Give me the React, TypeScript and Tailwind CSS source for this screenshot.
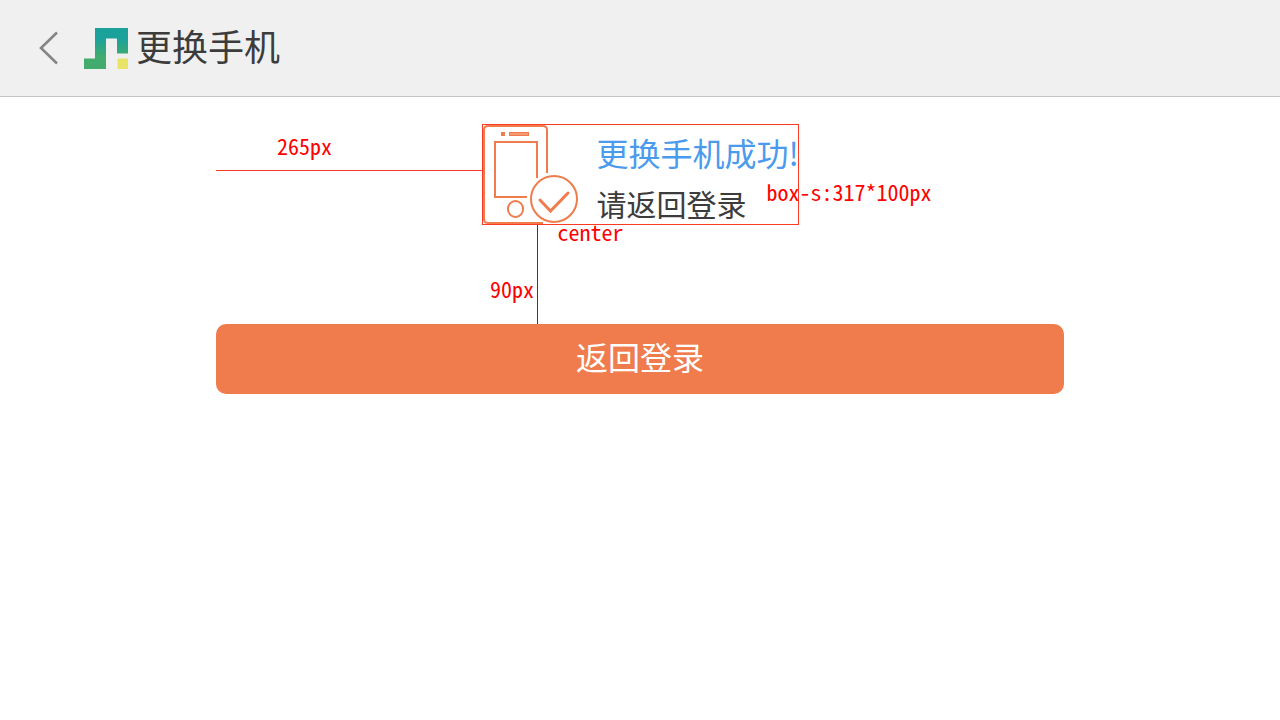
const noteFont =
  "font-['Noto_Sans_Mono_CJK_SC','Liberation_Mono','Noto_Sans_CJK_SC',monospace] text-[22px] leading-5 text-[#ff0000] whitespace-nowrap";

function BackIcon() {
  return (
    <svg width="20" height="34" viewBox="0 0 20 34" fill="none" aria-hidden="true">
      <path d="M18 1.500 L2 17 L18 32.500" stroke="#858585" strokeWidth="2.600" />
    </svg>
  );
}

function Logo() {
  return (
    <svg width="44" height="41" viewBox="0 0 44 41" aria-hidden="true">
      <defs>
        <linearGradient id="logo" x1="0" y1="0" x2="0" y2="41" gradientUnits="userSpaceOnUse">
          <stop offset="0.250" stopColor="#1aa19c" />
          <stop offset="0.720" stopColor="#43ab6d" />
        </linearGradient>
      </defs>
      <path d="M11 0H44V25.500H33V10.500H22V41H0V30.500H11Z" fill="url(#logo)" />
      <rect x="33.500" y="30.500" width="10.500" height="10.500" fill="#e9e467" />
    </svg>
  );
}

function PhoneCheckIcon() {
  return (
    <svg width="96" height="99" viewBox="0 0 96 99" fill="none" stroke="#f07c4d" strokeWidth="2" aria-hidden="true">
      <path d="M64 48V5Q64 1 60 1H5Q1 1 1 5V94Q1 98 5 98H60" />
      <rect x="18.500" y="7.500" width="3" height="3" fill="#f07c4d" strokeWidth="1" />
      <rect x="26.500" y="7.500" width="19" height="3" fill="#f59a74" strokeWidth="1" />
      <path d="M54 53V17H12V72H44" />
      <ellipse cx="32.500" cy="84" rx="7.600" ry="8" />
      <circle cx="71" cy="74" r="23" />
      <path d="M57 75L67.500 86L85 68" strokeWidth="3" strokeLinecap="round" />
    </svg>
  );
}

export default function App() {
  return (
    <div className="min-h-screen bg-white font-['Noto_Sans_CJK_SC',sans-serif] text-[#3c3c3c]">
      <header className="flex h-[97px] items-center border-b border-[#c4c4c4] bg-[#f0f0f0] pl-[39px]">
        <button type="button" aria-label="返回">
          <BackIcon />
        </button>
        <div className="ml-[25px]">
          <Logo />
        </div>
        <h1 className="ml-2 pb-1.5 text-4xl">更换手机</h1>
      </header>

      <main className="mx-auto max-w-[848px] pt-[27px]">
        <div className="flex">
          <div className="flex h-[47px] flex-1 flex-col border-b border-[#ff3a24] pt-[11px]">
            <span className={`pl-[61px] ${noteFont}`}>265px</span>
          </div>
          <section className="relative flex w-[317px] border border-[#ff3a24]">
            <PhoneCheckIcon />
            <div className="flex flex-col gap-2 pt-1 pl-[18px] whitespace-nowrap">
              <h2 className="w-0 text-[32px] leading-[46px] text-[#4a9bee]">更换手机成功!</h2>
              <p className="w-0 text-3xl leading-[41px]">请返回登录</p>
            </div>
            <span className={`absolute top-[56px] left-[284px] ${noteFont}`}>box-s:317*100px</span>
            <span className={`absolute top-[96px] left-[75px] ${noteFont}`}>center</span>
          </section>
          <div className="flex-1" />
        </div>
        <div className="flex h-[99px] w-[322px] items-center justify-end border-r border-[#c7000b] pt-[26px] pr-[3px]">
          <span className={noteFont}>90px</span>
        </div>
        <button type="button" className="h-[70px] w-full rounded-[10px] bg-[#f07c4d] pb-1.5 text-[32px] text-white">
          返回登录
        </button>
      </main>
    </div>
  );
}
